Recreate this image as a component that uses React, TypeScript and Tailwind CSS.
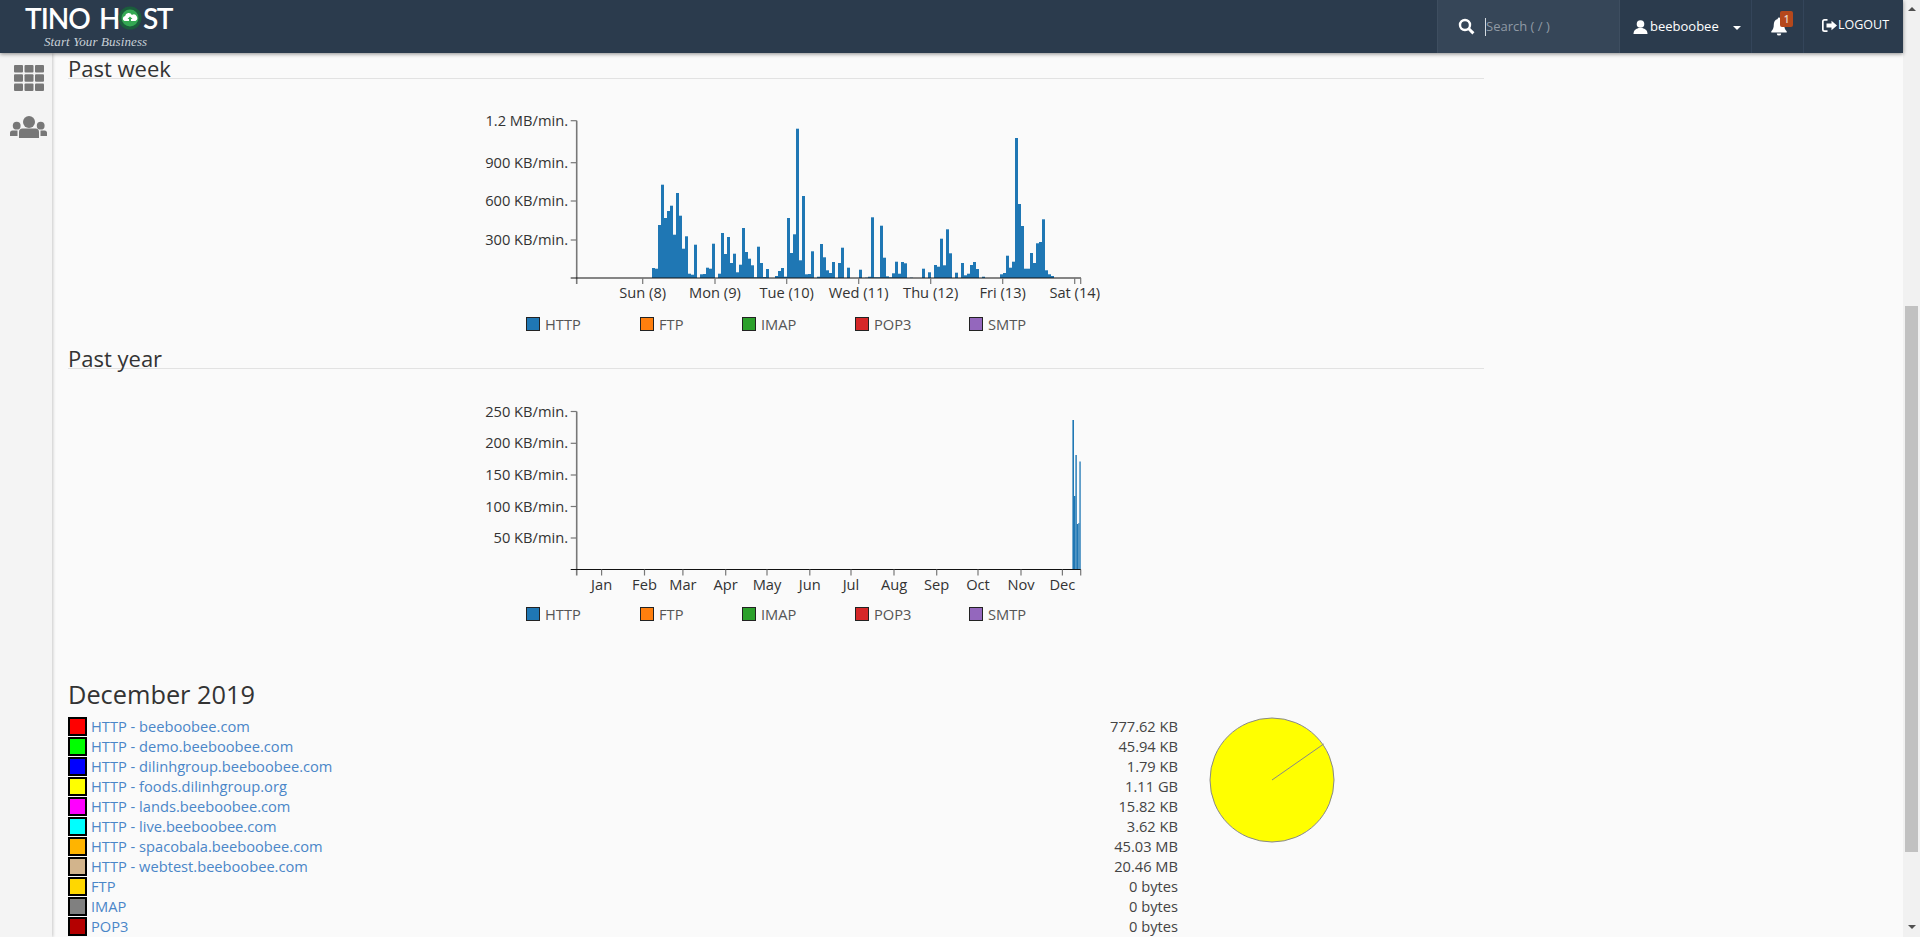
import React from 'react';

const weekBars = [
  10, 9.3, 53, 93.3, 60, 67, 72.3, 43.3, 85, 62.3, 29.3, 41.7, 4.3, 3.3, 33.3, 0, 3.7, 4, 10.3, 9.3, 34.3, 0, 4.3, 45, 24,
  41, 15, 24.3, 5.7, 13.3, 50, 26, 19.3, 12.7, 0.7, 31.3,
  15, 1, 9, 0, 0, 2, 7, 10, 1.3, 60, 25, 43.7, 149.3, 17.7, 82, 3.7, 4, 26.7, 0, 1.3, 34, 20.7, 7.7, 5, 16, 0, 15, 30.3, 0,
  10.3, 0, 0, 0, 8.3, 0, 0.3, 1.3, 60.7, 0.7, 0.7, 52.3, 20.3, 1.7, 0.7, 4.7, 16.3, 4.3, 16, 14.7, 0, 0.3, 0, 0, 0, 9.3, 0,
  5.7, 0, 13, 11.3, 39.3, 12.7, 48.7, 24.7, 0, 5.3, 0, 15, 2.7, 4.3, 13, 16, 9, 0, 1.3, 0, 0, 0, 0, 0, 3.7, 5, 22.3, 10.3,
  16.3, 140, 74, 52, 9.3, 9.3, 25, 15, 34.7, 36, 58.7, 7.7, 3.7, 2,
];

const weekChart = {
  yTicks: [
    { label: '1.2 MB/min.', y: 20.7 },
    { label: '900 KB/min.', y: 62.7 },
    { label: '600 KB/min.', y: 101 },
    { label: '300 KB/min.', y: 140 },
  ],
  base: 178,
  xTicks: [
    { label: 'Sun (8)', x: 182.7 },
    { label: 'Mon (9)', x: 255 },
    { label: 'Tue (10)', x: 326.7 },
    { label: 'Wed (11)', x: 398.7 },
    { label: 'Thu (12)', x: 470.7 },
    { label: 'Fri (13)', x: 542.7 },
    { label: 'Sat (14)', x: 614.7 },
  ],
  bars: weekBars.map((h, i) => ({ x: 192 + i * 3, w: 3, h })),
};

const yearChart = {
  yTicks: [
    { label: '250 KB/min.', y: 21.5 },
    { label: '200 KB/min.', y: 53.3 },
    { label: '150 KB/min.', y: 85 },
    { label: '100 KB/min.', y: 116.5 },
    { label: '50 KB/min.', y: 148 },
  ],
  base: 179.5,
  xTicks: [
    { label: 'Jan', x: 141.6 },
    { label: 'Feb', x: 184.5 },
    { label: 'Mar', x: 222.9 },
    { label: 'Apr', x: 265.7 },
    { label: 'May', x: 307 },
    { label: 'Jun', x: 349.8 },
    { label: 'Jul', x: 391 },
    { label: 'Aug', x: 434 },
    { label: 'Sep', x: 476.7 },
    { label: 'Oct', x: 518 },
    { label: 'Nov', x: 561 },
    { label: 'Dec', x: 602.4 },
  ],
  bars: [
    { x: 612.4, w: 1.6, h: 149.5 },
    { x: 614, w: 1.4, h: 73.5 },
    { x: 615.4, w: 1.4, h: 114.5 },
    { x: 616.8, w: 1.6, h: 45.5 },
    { x: 618.4, w: 1, h: 46.5 },
    { x: 619.4, w: 1.3, h: 108 },
  ],
};

const legend = [
  { name: 'HTTP', swatch: 'bg-[#1f77b4]', width: 'w-[114px]' },
  { name: 'FTP', swatch: 'bg-[#ff7f0e]', width: 'w-[102px]' },
  { name: 'IMAP', swatch: 'bg-[#2ca02c]', width: 'w-[113px]' },
  { name: 'POP3', swatch: 'bg-[#d62728]', width: 'w-[114px]' },
  { name: 'SMTP', swatch: 'bg-[#9467bd]', width: 'w-[114px]' },
];

const usage = [
  { name: 'HTTP - beeboobee.com', size: '777.62 KB', color: 'bg-[#ff0000]' },
  { name: 'HTTP - demo.beeboobee.com', size: '45.94 KB', color: 'bg-[#00ff00]' },
  { name: 'HTTP - dilinhgroup.beeboobee.com', size: '1.79 KB', color: 'bg-[#0000ff]' },
  { name: 'HTTP - foods.dilinhgroup.org', size: '1.11 GB', color: 'bg-[#ffff00]' },
  { name: 'HTTP - lands.beeboobee.com', size: '15.82 KB', color: 'bg-[#ff00ff]' },
  { name: 'HTTP - live.beeboobee.com', size: '3.62 KB', color: 'bg-[#00ffff]' },
  { name: 'HTTP - spacobala.beeboobee.com', size: '45.03 MB', color: 'bg-[#ffb400]' },
  { name: 'HTTP - webtest.beeboobee.com', size: '20.46 MB', color: 'bg-[#d2b48c]' },
  { name: 'FTP', size: '0 bytes', color: 'bg-[#ffd700]' },
  { name: 'IMAP', size: '0 bytes', color: 'bg-[#808080]' },
  { name: 'POP3', size: '0 bytes', color: 'bg-[#b40000]' },
];

function Chart({ chart }: { chart: typeof weekChart }) {
  const { yTicks, xTicks, bars, base } = chart;
  const top = yTicks[0].y;
  return (
    <svg width="640" height="206" className="ml-[392px] block text-[14.67px]">
      {bars.map((b, i) => (
        <rect key={i} x={b.x} y={base - b.h} width={b.w} height={b.h} fill="#1f77b4" />
      ))}
      <line x1="116.7" x2="116.7" y1={top} y2={base + 6} stroke="#777" strokeWidth="1.6" />
      <line x1="110.7" x2="621" y1={base} y2={base} stroke="#111" strokeWidth="1.2" />
      {yTicks.map((t) => (
        <g key={t.label}>
          <line x1="110.7" x2="116.7" y1={t.y} y2={t.y} stroke="#777" strokeWidth="1.2" />
          <text x="108" y={t.y + 5} textAnchor="end" fill="#333">
            {t.label}
          </text>
        </g>
      ))}
      {xTicks.map((t) => (
        <g key={t.label}>
          <line x1={t.x} x2={t.x} y1={base} y2={base + 6} stroke="#777" strokeWidth="1.2" />
          <text x={t.x} y={base + 20} textAnchor="middle" fill="#333">
            {t.label}
          </text>
        </g>
      ))}
      <line x1="620.7" x2="620.7" y1={base} y2={base + 6} stroke="#777" strokeWidth="1.2" />
    </svg>
  );
}

function Legend() {
  return (
    <div className="ml-[458px] flex h-[14px] items-center text-[14.67px] text-[#555]">
      {legend.map((item) => (
        <div key={item.name} className={`flex shrink-0 items-center ${item.width}`}>
          <span className={`mr-[5px] h-[14px] w-[14px] border border-[#222] ${item.swatch}`} />
          {item.name}
        </div>
      ))}
    </div>
  );
}

function SectionTitle({ children }: { children: React.ReactNode }) {
  return (
    <h3 className="mr-[403px] h-[26px] border-b border-[#e2e2e2] text-[22px] leading-[31px] text-[#333]">{children}</h3>
  );
}

function Logo() {
  return (
    <div className="ml-[25px] flex w-[150px] flex-col pt-[4px] text-white">
      <div className="flex h-[28px] items-center font-['Lato',sans-serif] text-[28px] leading-[28px] font-semibold">
        <span className="w-[74px] tracking-[-1px]">TINO</span>
        <span className="w-[19px]">H</span>
        <svg width="24" height="24" viewBox="0 0 24 24" className="mr-[1px]">
          <circle cx="12" cy="12" r="11.5" fill="#1b5e3c" />
          <circle cx="12" cy="12" r="8.5" fill="#34a853" />
          <path d="M6.5 15 a2.6 2.6 0 0 1 .6-5 a3.6 3.6 0 0 1 6.8-1 a3 3 0 0 1 3.6 6z" fill="#fff" />
          <path d="M12 10.5l-2.5 2.6h1.5v2h2v-2h1.5z" fill="#34a853" />
        </svg>
        <span className="tracking-[-1.5px]">ST</span>
      </div>
      <span className="ml-[19px] mt-[3px] font-['Liberation_Serif',serif] text-[13px] leading-[14px] tracking-[0.1px] text-[#c9d1d8] italic">
        Start Your Business
      </span>
    </div>
  );
}

function TopBar() {
  return (
    <header className="relative z-10 flex h-[53px] shrink-0 items-stretch bg-[#2b3b4d] shadow-[0_1px_4px_rgba(0,0,0,0.45)]">
      <Logo />
      <div className="ml-auto flex w-[183px] items-center border-x border-[#3e4e60] bg-[#364658] pl-[20px]">
        <svg width="17" height="17" viewBox="0 0 17 17" fill="none" stroke="#fff">
          <circle cx="7" cy="7" r="5" strokeWidth="2.4" />
          <path d="M10.8 10.8 L15.4 15.4" strokeWidth="3" />
        </svg>
        <input
          placeholder="Search ( / )"
          className="ml-[10px] h-[18px] w-[120px] border-l border-[#d5dbe1] bg-transparent text-[13px] outline-none placeholder:text-[#909aa5]"
        />
      </div>
      <div className="flex w-[132px] items-center border-r border-[#34455a] pl-[13px] text-[13px] text-white">
        <svg width="15" height="14" viewBox="0 0 15 14" fill="#fff">
          <circle cx="7.5" cy="4" r="3.8" />
          <path d="M0.5 14 C0.5 10 3 9 5.5 8 h4 C12 9 14.5 10 14.5 14z" />
        </svg>
        <span className="ml-[2px]">beeboobee</span>
        <span className="ml-[14px] mt-[3px] h-0 w-0 border-x-[4px] border-t-[4px] border-x-transparent border-t-white" />
      </div>
      <div className="relative flex w-[52px] items-center border-r border-[#34455a] pl-[19px]">
        <svg width="16" height="19" viewBox="0 0 16 19" fill="#fff">
          <path d="M8 0.5 a1.3 1.3 0 0 1 1.3 1.4 C12 2.6 13.2 4.8 13.2 7.5 c0 3.4 .8 5 2.5 6.8 v1.2 H0.3 v-1.2 C2 12.5 2.8 10.9 2.8 7.5 c0-2.7 1.2-4.9 3.9-5.6 A1.3 1.3 0 0 1 8 .5z" />
          <path d="M5.8 16.4 h4.4 a2.2 2.2 0 0 1-4.4 0z" />
        </svg>
        <span className="absolute left-[28px] top-[11px] flex h-[16px] w-[13px] items-center justify-center rounded-[2px] bg-[#b5481c] text-[10px] font-semibold text-[#e8d3c6]">
          1
        </span>
      </div>
      <div className="flex w-[99px] items-center pb-[3px] pl-[18px] text-[12.5px] text-white">
        <svg width="15" height="13" viewBox="0 0 15 13" fill="#fff">
          <path d="M5.5 0 H2.5 A2.5 2.5 0 0 0 0 2.5 v8 A2.5 2.5 0 0 0 2.5 13 h3 v-1.8 h-3 a.8.8 0 0 1-.8-.8 v-7.8 a.8.8 0 0 1 .8-.8 h3z" />
          <path d="M9.5 1.8 L15 6.5 L9.5 11.2 V8.4 H4.5 V4.6 h5z" />
        </svg>
        <span className="ml-[1px]">LOGOUT</span>
      </div>
    </header>
  );
}

function SideNav() {
  return (
    <aside className="flex w-[52px] shrink-0 flex-col items-start bg-[#f4f4f4] pt-[12px] shadow-[1px_0_3px_rgba(0,0,0,0.2)]">
      <svg width="30" height="26" viewBox="0 0 30 26" fill="#777" className="ml-[14px]">
        {[0, 10.5, 21].map((x) =>
          [0, 9.2, 18.4].map((y) => <rect key={`${x}-${y}`} x={x} y={y} width="9" height="7.6" rx="1" />),
        )}
      </svg>
      <svg width="37" height="23" viewBox="0 0 37 23" fill="#777" className="ml-[10px] mt-[25px]">
        <circle cx="19" cy="6" r="6" />
        <circle cx="6.7" cy="9.7" r="3.9" />
        <circle cx="30.7" cy="9.7" r="3.9" />
        <path d="M9 22 v-6 a3.5 3.5 0 0 1 3.5-3.5 h13 a3.5 3.5 0 0 1 3.5 3.5 v6z" />
        <path d="M0 20 v-3 a2.5 2.5 0 0 1 2.5-2.5 h5 v5.5z" />
        <path d="M30.5 14.5 h4 a2.5 2.5 0 0 1 2.5 2.5 v3 h-6.5z" />
      </svg>
    </aside>
  );
}

function UsageList() {
  return (
    <div className="mt-[7px] flex">
      <ul className="w-[1110px] shrink-0 text-[14.67px] leading-[20px]">
        {usage.map((row) => (
          <li key={row.name} className="flex h-[20px] items-center justify-between">
            <span className="flex items-center">
              <span className={`mr-[4px] h-[19px] w-[19px] border-2 border-black ${row.color}`} />
              <a href="#" className="text-[#4a86c8]">
                {row.name}
              </a>
            </span>
            <span className="text-[#444]">{row.size}</span>
          </li>
        ))}
      </ul>
      <svg width="126" height="126" viewBox="0 0 126 126" className="ml-[31px] mt-[1px]">
        <circle cx="63" cy="63" r="62" fill="#ffff00" stroke="#888" />
        <line x1="63" y1="63" x2="114.7" y2="27" stroke="#888" />
      </svg>
    </div>
  );
}

function ScrollTrack() {
  return (
    <div className="flex w-[17px] shrink-0 flex-col items-center bg-[#f1f1f1] pt-[7px]">
      <svg width="8" height="4" viewBox="0 0 8 4" fill="#505050">
        <polygon points="4,0 8,4 0,4" />
      </svg>
      <div className="mt-[295px] h-[546px] w-[13px] shrink-0 bg-[#c1c1c1]" />
      <svg width="8" height="4" viewBox="0 0 8 4" fill="#505050" className="mt-[73px]">
        <polygon points="0,0 8,0 4,4" />
      </svg>
    </div>
  );
}

export default function App() {
  return (
    <div className="flex h-[937px] w-[1920px] overflow-hidden bg-[#fafafa] font-['Open_Sans',sans-serif]">
      <div className="flex min-w-0 flex-1 flex-col">
        <TopBar />
        <div className="flex min-h-0 flex-1">
          <SideNav />
          <main className="min-w-0 flex-1 overflow-hidden px-[16px]">
            <SectionTitle>Past week</SectionTitle>
            <div className="pt-[21px]">
              <Chart chart={weekChart} />
              <div className="mt-[11px]">
                <Legend />
              </div>
            </div>
            <div className="mt-[12px]">
              <SectionTitle>Past year</SectionTitle>
            </div>
            <div className="pt-[21px]">
              <Chart chart={yearChart} />
              <div className="mt-[11px]">
                <Legend />
              </div>
            </div>
            <h2 className="mt-[58px] text-[25.33px] leading-[30px] text-[#333]">December 2019</h2>
            <UsageList />
          </main>
        </div>
      </div>
      <ScrollTrack />
    </div>
  );
}
